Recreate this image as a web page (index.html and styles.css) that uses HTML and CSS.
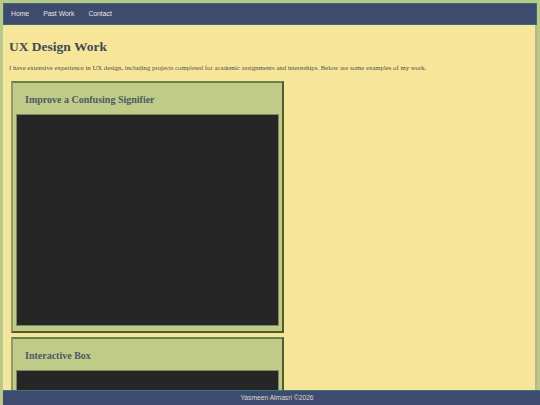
FILE: index.html
```html
<!DOCTYPE html>
<html lang="en">
<head>
<meta charset="utf-8">
<title>UX Design Work</title>
<link rel="stylesheet" href="styles.css">
</head>
<body>
<nav class="topnav">
  <a href="#" class="navlink">Home</a>
  <a href="#" class="navlink">Past Work</a>
  <a href="#" class="navlink">Contact</a>
</nav>
<main class="page">
  <h1 class="title">UX Design Work</h1>
  <p class="intro">I have extensive experience in UX design, including projects completed for academic assignments and internships. Below are some examples of my work.</p>
  <section class="card">
    <h2 class="card-title">Improve a Confusing Signifier</h2>
    <div class="media"></div>
  </section>
  <section class="card">
    <h2 class="card-title">Interactive Box</h2>
    <div class="media"></div>
  </section>
</main>
<footer class="footer">Yasmeen Almasri ©2026</footer>
</body>
</html>
```

FILE: styles.css
```css
html, body {
  margin: 0;
  padding: 0;
}
body {
  background: #bcc886;
  padding: 3px 3px 0 3px;
  font-family: "Liberation Serif", "Times New Roman", serif;
}
.topnav {
  display: flex;
  align-items: center;
  height: 20px;
  background: #3e4a6e;
  border: 1px solid #2f6f78;
}
.navlink {
  padding: 0 7px;
  color: #e8e8e8;
  text-decoration: none;
  font-family: "Liberation Sans", Arial, sans-serif;
  font-size: 6.8px;
  line-height: 20px;
}
.page {
  background: #f7e699;
  border-left: 2px solid #efeaa8;
  border-right: 2px solid #b8b78a;
  padding: 14px 6px 40px 4px;
}
.title {
  margin: 0;
  font-size: 13.5px;
  line-height: 16px;
  font-weight: bold;
  color: #414955;
}
.intro {
  margin: 8px 0 9px 0;
  font-size: 6.75px;
  line-height: 9px;
  color: #4f4f4f;
}
.card {
  width: 273px;
  box-sizing: border-box;
  margin: 0 0 4px 2px;
  padding: 3px 3px 5px 3px;
  background: #bfcb86;
  border: 2px solid;
  border-color: #6f7d4e #4e5d30 #4e5d30 #8f9b6f;
}
.card-title {
  margin: 0;
  padding: 8px 9px;
  font-size: 10px;
  line-height: 12px;
  font-weight: bold;
  color: #4e5966;
}
.media {
  height: 210px;
  background: #262626;
  border: 1px solid #7d8b5c;
}
.footer {
  position: fixed;
  left: 3px;
  right: 0;
  bottom: 0;
  height: 14px;
  padding-left: 11px;
  background: #3e4a6e;
  border-top: 1px solid #2f7a80;
  color: #dcdccc;
  font-family: "Liberation Sans", Arial, sans-serif;
  font-size: 6.7px;
  line-height: 14px;
  text-align: center;
}
```
